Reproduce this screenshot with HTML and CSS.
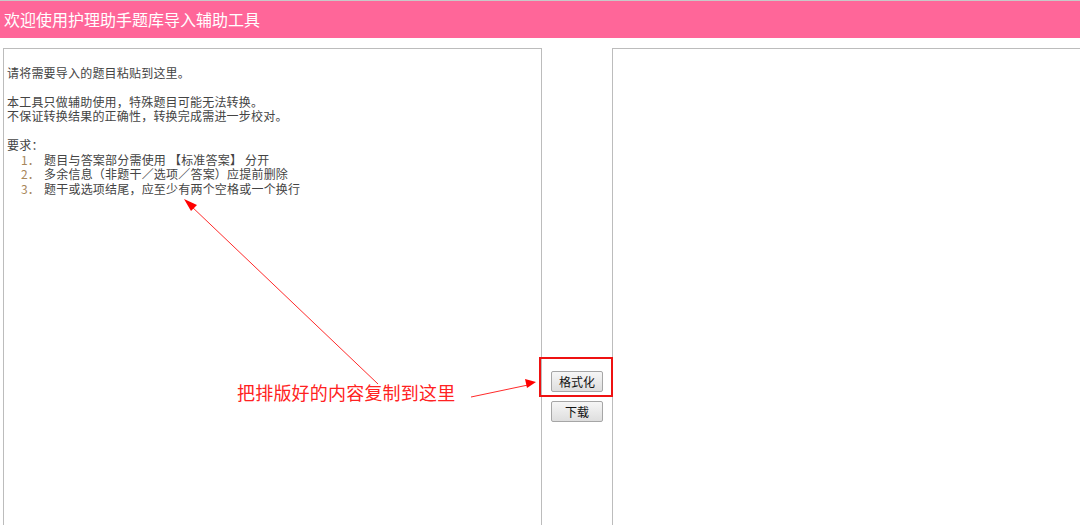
FILE: index.html
```html
<!DOCTYPE html>
<html lang="zh-CN">
<head>
    <meta charset="UTF-8">
    <title>护理助手题库导入辅助工具</title>
    <link rel="stylesheet" href="styles.css">
</head>
<body>
    <div class="header">欢迎使用护理助手题库导入辅助工具</div>
    <div class="main">
        <div class="box box-left">
            <p>&nbsp;</p>
            <p>请将需要导入的题目粘贴到这里。</p>
            <p>&nbsp;</p>
            <p>本工具只做辅助使用，特殊题目可能无法转换。</p>
            <p>不保证转换结果的正确性，转换完成需进一步校对。</p>
            <p>&nbsp;</p>
            <p>要求：</p>
            <p class="item"><span class="num">1．</span>题目与答案部分需使用 【标准答案】 分开</p>
            <p class="item"><span class="num">2．</span>多余信息（非题干／选项／答案）应提前删除</p>
            <p class="item"><span class="num">3．</span>题干或选项结尾，应至少有两个空格或一个换行</p>
        </div>
        <div class="actions">
            <button class="btn">格式化</button>
            <button class="btn">下载</button>
        </div>
        <div class="box box-right"></div>
    </div>

    <!-- annotation layer -->
    <div class="mark-box"></div>
    <div class="note">把排版好的内容复制到这里</div>
    <svg class="arrows" width="1080" height="525" viewBox="0 0 1080 525">
        <line x1="378" y1="384" x2="190" y2="205" stroke="#ff2a2a" stroke-width="1"/>
        <polygon points="184,199 197,205 191,211" fill="#ff0000"/>
        <line x1="471" y1="397" x2="528" y2="385" stroke="#ff2a2a" stroke-width="1"/>
        <polygon points="536,382 525,379 527,388" fill="#ff0000"/>
    </svg>
</body>
</html>
```

FILE: styles.css
```css
body {
    margin: 0;
    font-family: "Noto Sans CJK SC", "Liberation Sans", sans-serif;
    background-color: #fff;
    overflow: hidden;
    height: 525px;
    position: relative;
}
.header {
    border-top: 1px solid #c8c8c8;
    background-color: #ff6699;
    color: #fff;
    font-size: 16px;
    height: 37px;
    line-height: 36px;
    padding-left: 4px;
}
.main {
    display: flex;
    margin-top: 10px;
    padding-left: 3px;
}
.box {
    border: 1px solid #bcbcbc;
    height: 520px;
    box-sizing: border-box;
    background-color: #fff;
}
.box-left {
    width: 539px;
    padding: 2px 3px;
    font-size: 12px;
    color: #444;
}
.box p {
    margin: 0;
    height: 14.5px;
    line-height: 14.5px;
    white-space: nowrap;
    letter-spacing: 0.2px;
}
.box .item {
    padding-left: 14px;
}
.num {
    color: #a8875a;
    margin-right: 4px;
}
.box-right {
    flex: 1;
    border-right: none;
}
.actions {
    width: 70px;
    display: flex;
    flex-direction: column;
    align-items: center;
    padding-top: 323px;
    gap: 9px;
}
.btn {
    width: 52px;
    height: 21px;
    padding: 0;
    font-family: "Noto Sans CJK SC", sans-serif;
    font-size: 12px;
    color: #111;
    border: 1px solid #a6a6a6;
    border-radius: 2px;
    background: linear-gradient(#f6f6f6, #dedede);
    cursor: pointer;
}
.mark-box {
    position: absolute;
    left: 539px;
    top: 357px;
    width: 70px;
    height: 36px;
    border: 2px solid #ee1111;
}
.note {
    position: absolute;
    left: 237px;
    top: 379px;
    font-size: 18px;
    color: #ff2222;
    letter-spacing: 0.2px;
}
.arrows {
    position: absolute;
    left: 0;
    top: 0;
    pointer-events: none;
}
```
